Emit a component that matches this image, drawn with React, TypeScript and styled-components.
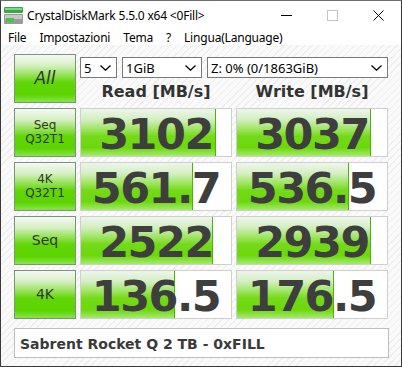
import * as React from 'react';
import styled, { createGlobalStyle } from 'styled-components';

const GlobalStyle = createGlobalStyle`
  html, body {
    margin: 0;
    padding: 0;
    background: #ffffff;
  }
  * {
    box-sizing: border-box;
  }
`;

const uiFont = `"Noto Sans", "Open Sans", sans-serif`;
const heavyFont = `"DejaVu Sans", Verdana, sans-serif`;

const Window = styled.div`
  width: 402px;
  height: 367px;
  display: flex;
  flex-direction: column;
  border: 1px solid #3a3a3a;
  border-top-color: #6e6e6e;
  background: #ffffff;
  overflow: hidden;
`;

const TitleBar = styled.div`
  height: 29px;
  display: flex;
  align-items: center;
  padding-left: 3px;
  font-family: ${uiFont};
  font-size: 12px;
  color: #000;
`;

const Title = styled.span`
  margin-left: 4px;
  flex: 1;
  letter-spacing: -0.2px;
`;

const WinButton = styled.div`
  width: 46px;
  height: 29px;
  display: flex;
  align-items: center;
  justify-content: center;
`;

const MenuBar = styled.div`
  height: 15px;
  display: flex;
  align-items: center;
  gap: 13px;
  padding-left: 7px;
  font-family: ${uiFont};
  font-size: 12px;
  letter-spacing: -0.2px;
  color: #000;
`;

const Content = styled.div`
  flex: 1;
  padding: 9px 12px 0 13px;
  background-color: #fafafa;
  background-image: repeating-linear-gradient(
    -45deg,
    #fafafa 0px,
    #fafafa 4px,
    #eeeeee 4px,
    #eeeeee 5px
  );
`;

const Board = styled.div`
  display: grid;
  grid-template-columns: 62px 152px 152px;
  grid-template-rows: 49px repeat(4, 49px);
  column-gap: 4px;
  row-gap: 5px;
`;

const LabelButton = styled.div<{ $size: number; $italic?: boolean }>`
  border: 1px solid #7c937c;
  background: linear-gradient(
    to bottom,
    #f6f8f4 0%,
    #d6f0c4 22%,
    #8ee04c 45%,
    #62d606 58%,
    #5cd400 84%,
    #86e44c 100%
  );
  display: flex;
  flex-direction: column;
  align-items: center;
  justify-content: center;
  font-family: ${heavyFont};
  font-size: ${(p) => p.$size}px;
  font-style: ${(p) => (p.$italic ? 'italic' : 'normal')};
  line-height: 1.1;
  color: #2f382c;
  text-align: center;
`;

const TopPanel = styled.div`
  grid-column: 2 / 4;
  display: grid;
  grid-template-columns: 152px 152px;
  grid-template-rows: 21px 1fr;
  column-gap: 4px;
  padding-top: 3px;
`;

const Selects = styled.div`
  grid-column: 1 / 3;
  display: flex;
  gap: 5px;
`;

const Select = styled.div<{ $w: number }>`
  width: ${(p) => p.$w}px;
  height: 21px;
  border: 1px solid #7a7a7a;
  background: #fff;
  display: flex;
  align-items: center;
  justify-content: space-between;
  padding: 0 5px 0 3px;
  font-family: ${uiFont};
  font-size: 13px;
  color: #000;
`;

const Header = styled.div`
  display: flex;
  align-items: center;
  justify-content: center;
  padding-top: 1px;
  font-family: ${heavyFont};
  font-weight: bold;
  font-size: 16px;
  color: #333333;
`;

const Cell = styled.div`
  position: relative;
  border: 1px solid #cfcfcf;
  background: #ffffff;
  overflow: hidden;
`;

const Bar = styled.div`
  position: absolute;
  left: 0;
  top: 0;
  bottom: 0;
  border-right: 1px solid #4fb010;
  background: linear-gradient(
    to bottom,
    #eef5ec 0%,
    #d4efc2 22%,
    #9ce45c 44%,
    #74da18 58%,
    #6cd80c 82%,
    #a4ea6c 100%
  );
`;

const Score = styled.div`
  position: relative;
  height: 100%;
  display: flex;
  align-items: center;
  justify-content: center;
  padding-top: 2px;
  font-family: ${heavyFont};
  font-weight: bold;
  font-size: 43px;
  letter-spacing: -1.5px;
  color: #3e3e3e;
`;

const NameBox = styled.div`
  margin-top: 9px;
  width: 375px;
  height: 30px;
  border: 1px solid #bdbdbd;
  background: #ffffff;
  display: flex;
  align-items: center;
  padding-left: 5px;
  padding-top: 1px;
  font-family: ${heavyFont};
  font-weight: bold;
  font-size: 14px;
  color: #3a3a3a;
`;

const Chevron = () => (
  <svg width="11" height="6" viewBox="0 0 11 6">
    <path d="M0.5 0.5 L5.5 5.2 L10.5 0.5" fill="none" stroke="#000" strokeWidth="1.3" />
  </svg>
);

const AppIcon = () => (
  <svg width="19" height="17" viewBox="0 0 19 17">
    <rect x="0" y="0" width="19" height="6" rx="1" fill="#3aa64a" />
    <rect x="1" y="1" width="17" height="2" fill="#7fd88a" />
    <rect x="0" y="7" width="19" height="10" rx="1" fill="#9a9a9a" />
    <rect x="1" y="8" width="17" height="4" fill="#c8c8c8" />
    <rect x="2" y="11" width="8" height="4" fill="#49c24e" />
  </svg>
);

type Row = { label: string[]; size: number; read: number; write: number };

const rows: Row[] = [
  { label: ['Seq', 'Q32T1'], size: 12, read: 3102, write: 3037 },
  { label: ['4K', 'Q32T1'], size: 12, read: 561.7, write: 536.5 },
  { label: ['Seq'], size: 14, read: 2522, write: 2939 },
  { label: ['4K'], size: 14, read: 136.5, write: 176.5 },
];

const fmt = (v: number) => (v >= 1000 ? String(Math.round(v)) : v.toFixed(1));
const meter = (v: number) => Math.min(1, Math.log10(v * 10) / 5);

const ScoreCell = ({ value }: { value: number }) => (
  <Cell>
    <Bar style={{ width: `${meter(value) * 100}%` }} />
    <Score>{fmt(value)}</Score>
  </Cell>
);

const App = () => (
  <>
    <GlobalStyle />
    <Window>
      <TitleBar>
        <AppIcon />
        <Title>CrystalDiskMark 5.5.0 x64 &lt;0Fill&gt;</Title>
        <WinButton>
          <svg width="11" height="2" viewBox="0 0 11 2">
            <rect width="11" height="1" fill="#000" />
          </svg>
        </WinButton>
        <WinButton>
          <svg width="11" height="11" viewBox="0 0 11 11">
            <rect x="0.5" y="0.5" width="10" height="10" fill="none" stroke="#c4c4c4" />
          </svg>
        </WinButton>
        <WinButton>
          <svg width="11" height="11" viewBox="0 0 11 11">
            <path d="M0.5 0.5 L10.5 10.5 M10.5 0.5 L0.5 10.5" stroke="#000" strokeWidth="1" />
          </svg>
        </WinButton>
      </TitleBar>
      <MenuBar>
        <span>File</span>
        <span>Impostazioni</span>
        <span>Tema</span>
        <span>?</span>
        <span>Lingua(Language)</span>
      </MenuBar>
      <Content>
        <Board>
          <LabelButton $size={17} $italic>All</LabelButton>
          <TopPanel>
            <Selects>
              <Select $w={37}>
                <span>5</span>
                <Chevron />
              </Select>
              <Select $w={80}>
                <span>1GiB</span>
                <Chevron />
              </Select>
              <Select $w={181}>
                <span>Z: 0% (0/1863GiB)</span>
                <Chevron />
              </Select>
            </Selects>
            <Header>Read [MB/s]</Header>
            <Header>Write [MB/s]</Header>
          </TopPanel>
          {rows.map((r) => (
            <React.Fragment key={r.label.join('-') + r.read}>
              <LabelButton $size={r.size}>
                {r.label.map((l) => (
                  <span key={l}>{l}</span>
                ))}
              </LabelButton>
              <ScoreCell value={r.read} />
              <ScoreCell value={r.write} />
            </React.Fragment>
          ))}
        </Board>
        <NameBox>Sabrent Rocket Q 2 TB - 0xFILL</NameBox>
      </Content>
    </Window>
  </>
);

export default App;
